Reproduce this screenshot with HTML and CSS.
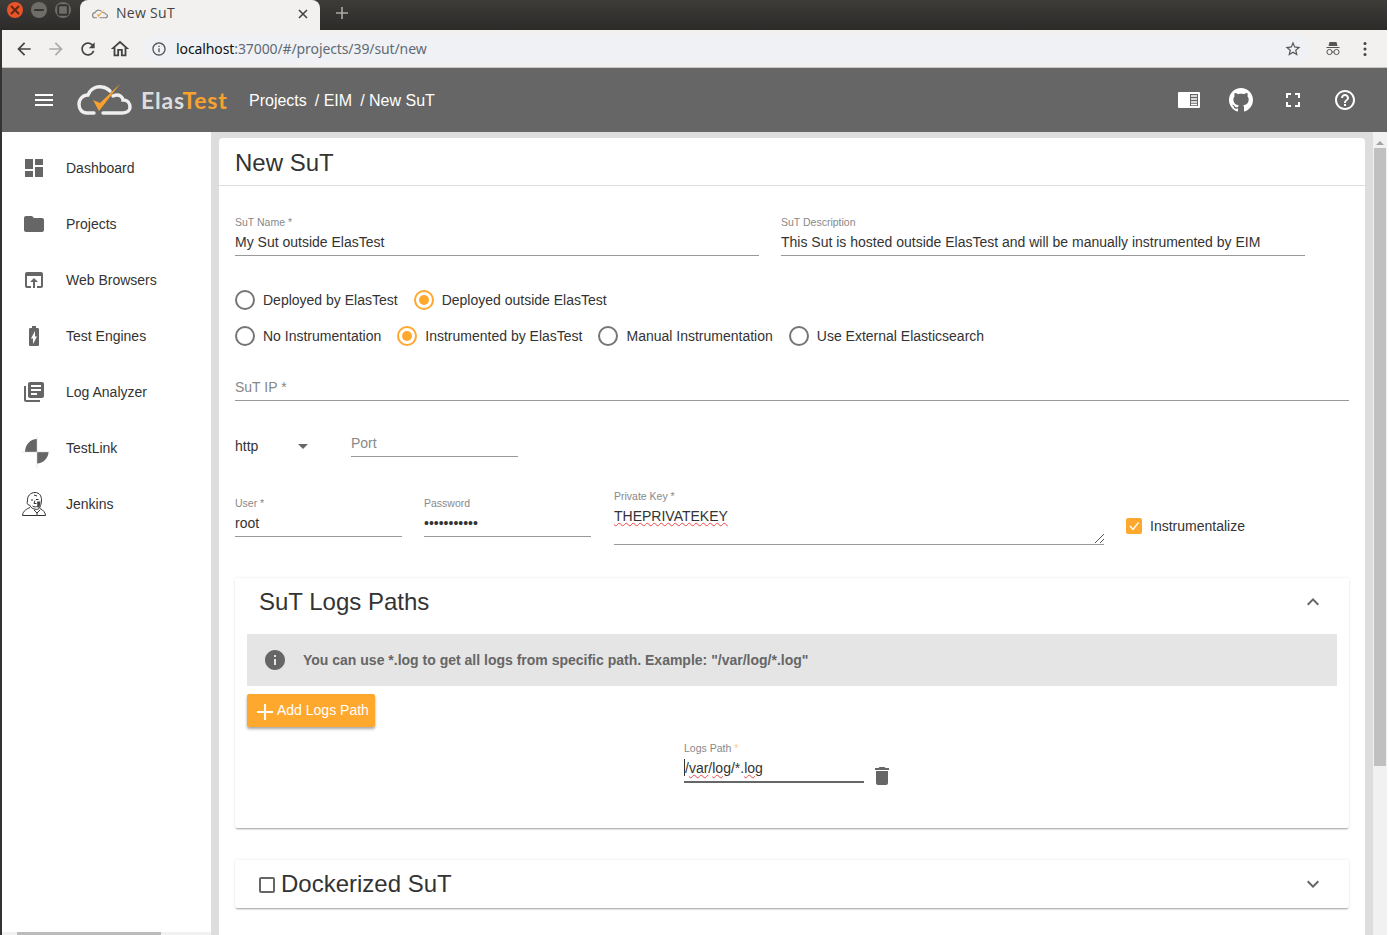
FILE: index.html
```html
<!DOCTYPE html>
<html lang="en">
<head>
  <meta charset="UTF-8">
  <title>New SuT</title>
  <link rel="stylesheet" href="styles.css">
</head>
<body>
<div class="window">

  <!-- Browser tabs -->
  <div class="tabstrip">
    <div class="winbtns">
      <span class="winbtn winbtn-close"><svg viewBox="0 0 10 10"><path d="M2.5 2.5l5 5M7.5 2.5l-5 5" stroke="#5a2a14" stroke-width="1.2"/></svg></span>
      <span class="winbtn"><svg viewBox="0 0 10 10"><path d="M2 5h6" stroke="#333" stroke-width="1.2"/></svg></span>
      <span class="winbtn"><svg viewBox="0 0 10 10"><rect x="2" y="2" width="6" height="6" rx="1" fill="none" stroke="#333" stroke-width="1.2"/></svg></span>
    </div>
    <div class="tab">
      <svg class="favicon" viewBox="0 0 55 32"><path d="M17 29H10C4 29 2 24 2 20 2 15 6 11 11 11 13 5 19 2 25 3 28 3 31 5 33 7M36 12C43 9 46 14 46 16 51 16 53 20 53 23 53 27 49 29 45 29H26" fill="none" stroke="#888" stroke-width="4"/><path d="M16 16l6 11L43 0 23 19z" fill="#f9a12e"/></svg>
      <span class="tab-title">New SuT</span>
      <svg class="tab-x" viewBox="0 0 10 10"><path d="M1 1l8 8M9 1l-8 8" stroke="#444" stroke-width="1.6"/></svg>
    </div>
    <svg class="tab-new" viewBox="0 0 12 12"><path d="M6 0v12M0 6h12" stroke="#aaa" stroke-width="1.6"/></svg>
  </div>

  <!-- Browser address bar -->
  <div class="urlbar">
    <svg class="nav-icon" viewBox="0 0 24 24"><path fill="#444" d="M20 11H7.83l5.59-5.59L12 4l-8 8 8 8 1.41-1.41L7.83 13H20v-2z"/></svg>
    <svg class="nav-icon" viewBox="0 0 24 24"><path fill="#aaa" d="M4 11h12.170l-5.590-5.590L12 4l8 8-8 8-1.410-1.410L16.170 13H4v-2z"/></svg>
    <svg class="nav-icon" viewBox="0 0 24 24"><path fill="#444" d="M17.65 6.35C16.2 4.9 14.21 4 12 4c-4.42 0-7.99 3.58-7.99 8s3.57 8 7.99 8c3.73 0 6.84-2.55 7.73-6h-2.08c-.82 2.33-3.04 4-5.65 4-3.31 0-6-2.69-6-6s2.69-6 6-6c1.66 0 3.14.69 4.22 1.78L13 11h7V4l-2.35 2.35z"/></svg>
    <svg class="nav-icon nav-home" viewBox="0 0 24 24"><path fill="#444" d="M12 5.69l5 4.5V18h-2v-6H9v6H7v-7.81l5-4.5M12 3L2 12h3v8h6v-6h2v6h6v-8h3L12 3z"/></svg>
    <div class="omnibox">
      <svg class="omni-info" viewBox="0 0 24 24"><path fill="#555" d="M11 7h2v2h-2zm0 4h2v6h-2zm1-9C6.48 2 2 6.48 2 12s4.48 10 10 10 10-4.48 10-10S17.52 2 12 2zm0 18c-4.41 0-8-3.59-8-8s3.59-8 8-8 8 3.59 8 8-3.59 8-8 8z"/></svg>
      <span class="url"><span class="url-host">localhost</span>:37000/#/projects/39/sut/new</span>
      <svg class="omni-star" viewBox="0 0 24 24"><path fill="#555" d="M22 9.24l-7.19-.62L12 2 9.19 8.63 2 9.24l5.46 4.73L5.82 21 12 17.27 18.18 21l-1.63-7.03L22 9.24zM12 15.4l-3.76 2.27 1-4.28-3.32-2.88 4.38-.38L12 6.1l1.71 4.04 4.38.38-3.32 2.88 1 4.28L12 15.4z"/></svg>
    </div>
    <svg class="incognito" viewBox="0 0 16 16"><path fill="#555" d="M4.5 1h7l1 4h-9zM1.5 6h13v1h-13z"/><circle cx="4.5" cy="11" r="2.6" fill="none" stroke="#555"/><circle cx="11.5" cy="11" r="2.6" fill="none" stroke="#555"/><path d="M7 11h2" stroke="#555"/></svg>
    <svg class="dots" viewBox="0 0 4 16"><circle cx="2" cy="2.5" r="1.5" fill="#444"/><circle cx="2" cy="8" r="1.5" fill="#444"/><circle cx="2" cy="13.5" r="1.5" fill="#444"/></svg>
  </div>

  <!-- App toolbar -->
  <header class="toolbar">
    <svg class="menu-icon" viewBox="0 0 24 24"><path fill="#fff" d="M3 18h18v-2H3v2zm0-5h18v-2H3v2zm0-7v2h18V6H3z"/></svg>
    <svg class="logo" viewBox="0 0 55 32"><path d="M17 29H10C4 29 2 24 2 20 2 15 6 11 11 11 13 5 19 2 25 3 28 3 31 5 33 7M36 12C43 9 46 14 46 16 51 16 53 20 53 23 53 27 49 29 45 29H26" fill="none" stroke="#eee" stroke-width="3.400" stroke-linecap="round"/><path d="M16 16l6 11L43 0 23 19z" fill="#f9a12e"/></svg>
    <span class="brand">Elas<span class="brand-test">Test</span></span>
    <nav class="crumbs">Projects<span class="crumb-sep">/ EIM</span><span class="crumb-sep">/ New SuT</span></nav>
    <div class="toolbar-actions">
      <span class="action"><svg width="24" height="24" viewBox="0 0 24 24"><rect x="1" y="4" width="22" height="16" rx="1" fill="#fff"/><rect x="13" y="6" width="8" height="12" fill="#666"/><path d="M14 8h6M14 11h6M14 14h6M14 16.5h6" stroke="#fff" stroke-width="1.4"/></svg></span>
      <span class="action"><svg width="24" height="24" viewBox="0 0 16 16"><path fill="#fff" d="M8 0C3.58 0 0 3.58 0 8c0 3.54 2.29 6.53 5.47 7.59.4.07.55-.17.55-.38 0-.19-.01-.82-.01-1.49-2.01.37-2.53-.49-2.69-.94-.09-.23-.48-.94-.82-1.13-.28-.15-.68-.52-.01-.53.63-.01 1.08.58 1.23.82.72 1.21 1.87.87 2.33.66.07-.52.28-.87.51-1.07-1.78-.2-3.64-.89-3.64-3.95 0-.87.31-1.59.82-2.15-.08-.2-.36-1.02.08-2.12 0 0 .67-.21 2.2.82.64-.18 1.32-.27 2-.27.68 0 1.36.09 2 .27 1.53-1.04 2.2-.82 2.2-.82.44 1.1.16 1.92.08 2.12.51.56.82 1.27.82 2.15 0 3.07-1.87 3.75-3.65 3.95.29.25.54.73.54 1.48 0 1.07-.01 1.93-.01 2.2 0 .21.15.46.55.38A8.013 8.013 0 0016 8c0-4.42-3.58-8-8-8z"/></svg></span>
      <span class="action"><svg width="24" height="24" viewBox="0 0 24 24"><path fill="#fff" d="M7 14H5v5h5v-2H7v-3zm-2-4h2V7h3V5H5v5zm12 7h-3v2h5v-5h-2v3zM14 5v2h3v3h2V5h-5z"/></svg></span>
      <span class="action"><svg width="24" height="24" viewBox="0 0 24 24"><path fill="#fff" d="M11 18h2v-2h-2v2zm1-16C6.48 2 2 6.48 2 12s4.48 10 10 10 10-4.48 10-10S17.52 2 12 2zm0 18c-4.41 0-8-3.59-8-8s3.59-8 8-8 8 3.59 8 8-3.59 8-8 8zm0-14c-2.21 0-4 1.79-4 4h2c0-1.1.9-2 2-2s2 .9 2 2c0 2-3 1.75-3 5h2c0-2.25 3-2.5 3-5 0-2.21-1.79-4-4-4z"/></svg></span>
    </div>
  </header>

  <div class="shell">

    <!-- Side navigation -->
    <aside class="sidenav">
      <ul class="navlist">
        <li class="navitem"><svg class="navicon" viewBox="0 0 24 24"><path d="M3 13h8V3H3v10zm0 8h8v-6H3v6zm10 0h8V11h-8v10zm0-18v6h8V3h-8z"/></svg>Dashboard</li>
        <li class="navitem"><svg class="navicon" viewBox="0 0 24 24"><path d="M10 4H4c-1.1 0-1.99.9-1.99 2L2 18c0 1.1.9 2 2 2h16c1.1 0 2-.9 2-2V8c0-1.1-.9-2-2-2h-8l-2-2z"/></svg>Projects</li>
        <li class="navitem"><svg class="navicon" viewBox="0 0 24 24"><path d="M19 4H5c-1.11 0-2 .9-2 2v12c0 1.1.89 2 2 2h4v-2H5V8h14v10h-4v2h4c1.1 0 2-.9 2-2V6c0-1.1-.89-2-2-2zm-7 6l-4 4h3v6h2v-6h3l-4-4z"/></svg>Web Browsers</li>
        <li class="navitem"><svg class="navicon" viewBox="0 0 24 24"><path d="M15.67 4H14V2h-4v2H8.33C7.6 4 7 4.6 7 5.33v15.33C7 21.4 7.6 22 8.33 22h7.33c.74 0 1.34-.6 1.34-1.33V5.33C17 4.6 16.4 4 15.67 4zM11 20v-5.5H9L13 7v5.500h2L11 20z"/></svg>Test Engines</li>
        <li class="navitem"><svg class="navicon" viewBox="0 0 24 24"><path d="M4 6H2v14c0 1.1.9 2 2 2h14v-2H4V6zm16-4H8c-1.1 0-2 .9-2 2v12c0 1.1.9 2 2 2h12c1.1 0 2-.9 2-2V4c0-1.1-.9-2-2-2zm-1 9H9V9h10v2zm-4 4H9v-2h6v2zm4-8H9V5h10v2z"/></svg>Log Analyzer</li>
        <li class="navitem"><svg class="navicon" viewBox="0 0 24 24"><path d="M15 3V16H3C3 9 8 3 15 3Z"/><path d="M15 16H26.500C26.500 22 21 27.500 15 27.500Z"/><path d="M15 1V32M0 16H28" stroke="#ccc" stroke-width=".5"/></svg>TestLink</li>
        <li class="navitem"><svg class="navicon" viewBox="0 0 24 24"><g fill="none" stroke="#333" stroke-width="1"><path d="M5.500 9C5 4 8.500 .5 13 .5S19.500 4 19.500 8 18.500 13 18 15 15 18 12 17 8.500 14.500 7.500 13C5.500 13.500 4.500 10.500 5.500 9Z"/><path d="M9 8h2M14 7.500h2.500M13 8.500L12 11.500h2.500M10.500 14c2 1.500 3.500 1 5.500 0M12 3l3 1"/><path d="M8 15.500C5 17 1 18.500 .5 23.500H23.500C23.500 21 21.500 18 18 16.500"/><path d="M12 18l3 3 3-3M15 21v2.500"/></g><path d="M15 9.500h3.500l-1 6h-2z" fill="#444"/></svg>Jenkins</li>
      </ul>
      <div class="hscroll"><div class="hscroll-thumb"></div></div>
    </aside>

    <!-- Main content -->
    <main class="content">
      <section class="card">
        <h1 class="card-title">New SuT</h1>

        <form class="form">
          <div class="row row-name">
            <div class="field field-half">
              <div class="field-label">SuT Name *</div>
              <div class="field-value">My Sut outside ElasTest</div>
            </div>
            <div class="field field-half">
              <div class="field-label">SuT Description</div>
              <div class="field-value">This Sut is hosted outside ElasTest and will be manually instrumented by EIM</div>
            </div>
          </div>

          <div class="radios radios-deploy">
            <span class="radio"><span class="radio-dot"></span>Deployed by ElasTest</span>
            <span class="radio radio-on"><span class="radio-dot"></span>Deployed outside ElasTest</span>
          </div>
          <div class="radios radios-instr">
            <span class="radio"><span class="radio-dot"></span>No Instrumentation</span>
            <span class="radio radio-on"><span class="radio-dot"></span>Instrumented by ElasTest</span>
            <span class="radio"><span class="radio-dot"></span>Manual Instrumentation</span>
            <span class="radio"><span class="radio-dot"></span>Use External Elasticsearch</span>
          </div>

          <div class="field field-ip">
            <div class="field-value field-hint">SuT IP *</div>
          </div>

          <div class="row row-port">
            <div class="select">http<span class="select-arrow"></span></div>
            <div class="field field-port">
              <div class="field-value field-hint">Port</div>
            </div>
          </div>

          <div class="row row-access">
            <div class="field field-user">
              <div class="field-label">User *</div>
              <div class="field-value">root</div>
            </div>
            <div class="field field-user">
              <div class="field-label">Password</div>
              <div class="field-value">•••••••••••</div>
            </div>
            <div class="field field-key">
              <div class="field-label">Private Key *</div>
              <div class="field-value"><span class="misspelt">THEPRIVATEKEY</span></div>
              <svg class="grip" viewBox="0 0 10 10"><path d="M1 10L10 1M6 10l4-4" stroke="#555" stroke-width="1"/></svg>
            </div>
            <label class="check">
              <span class="check-box"><svg viewBox="0 0 16 16"><path d="M4 8l3 3.500L12.500 4.500" fill="none" stroke="#fff" stroke-width="1.300"/></svg></span>
              Instrumentalize
            </label>
          </div>

          <section class="panel panel-logs">
            <div class="panel-head">
              <h2 class="panel-title">SuT Logs Paths</h2>
              <svg class="chevron" viewBox="0 0 24 24"><path d="M12 8l-6 6 1.41 1.41L12 10.83l4.59 4.58L18 14z"/></svg>
            </div>
            <div class="panel-body">
              <div class="info">
                <svg class="info-icon" viewBox="0 0 24 24"><path d="M12 2C6.48 2 2 6.48 2 12s4.48 10 10 10 10-4.48 10-10S17.52 2 12 2zm1 15h-2v-6h2v6zm0-8h-2V7h2v2z"/></svg>
                You can use *.log to get all logs from specific path. Example: "/var/log/*.log"
              </div>
              <button type="button" class="add-btn">
                <svg class="add-plus" viewBox="0 0 16 16"><path d="M8 0v16M0 8h16" stroke="#fff" stroke-width="2"/></svg>
                Add Logs Path
              </button>
              <div class="log-row">
                <div class="field field-log">
                  <div class="field-label">Logs Path <span class="req">*</span></div>
                  <div class="field-value"><span class="caret"></span>/<span class="misspelt">var</span>/<span class="misspelt">log</span>/*.<span class="misspelt">log</span></div>
                </div>
                <svg class="trash" viewBox="0 0 24 24"><path d="M6 19c0 1.100.9 2 2 2h8c1.100 0 2-.9 2-2V7H6v12zM19 4h-3.500l-1-1h-5l-1 1H5v2h14V4z"/></svg>
              </div>
            </div>
          </section>

          <section class="panel panel-docker">
            <div class="panel-head">
              <h2 class="panel-title"><span class="docker-box"></span>Dockerized SuT</h2>
              <svg class="chevron" viewBox="0 0 24 24"><path d="M16.59 8.590L12 13.170 7.410 8.590 6 10l6 6 6-6z"/></svg>
            </div>
          </section>
        </form>
      </section>
      <div class="vscroll">
        <span class="vscroll-up"></span>
        <div class="vscroll-thumb"></div>
      </div>
    </main>
  </div>
</div>
</body>
</html>
```

FILE: styles.css
```css
* {
  box-sizing: border-box;
}

html, body {
  margin: 0;
  height: 100%;
  overflow: hidden;
  background-color: #fff;
}

body {
  font-family: "Liberation Sans", Arial, sans-serif;
  font-size: 14px;
  color: #333;
}

.window {
  width: 1387px;
  height: 935px;
  border-left: 2px solid #333;
  display: flex;
  flex-direction: column;
}

/* browser tabs */
.tabstrip {
  height: 30px;
  margin-left: -2px;
  background: linear-gradient(#3d3c39, #2c2b29);
  display: flex;
  align-items: flex-start;
  flex: none;
}

.winbtns {
  width: 80px;
  display: flex;
  gap: 8px;
  padding: 2px 0 0 7px;
}

.winbtn {
  width: 16px;
  height: 16px;
  border-radius: 50%;
  background-color: #6f6d68;
  display: flex;
}

.winbtn-close {
  background-color: #e9542a;
}

.tab {
  width: 240px;
  height: 30px;
  background-color: #f2f1f0;
  border-radius: 8px 8px 0 0;
  display: flex;
  align-items: center;
  padding: 0 12px 6px;
}

.favicon {
  width: 16px;
  height: 10px;
  margin: 3px 8px 0 0;
}

.tab-title {
  flex: 1;
  font-family: "Open Sans", sans-serif;
  font-size: 14px;
  letter-spacing: 0.3px;
  color: #444;
}

.tab-x {
  width: 10px;
  height: 10px;
  margin: 3px 0 0;
}

.tab-new {
  width: 12px;
  height: 12px;
  margin: 7px 0 0 16px;
}

/* address bar */
.urlbar {
  height: 38px;
  background-color: #f2f1f0;
  border-bottom: 1px solid #c8c6c2;
  display: flex;
  align-items: center;
  padding-left: 12px;
  flex: none;
}

.nav-icon {
  width: 20px;
  height: 20px;
  margin-right: 12px;
}

.nav-home {
  width: 22px;
  height: 22px;
  margin: 0 9px 0 -1px;
}

.omnibox {
  width: 1167px;
  height: 28px;
  margin-left: 3px;
  border-radius: 14px;
  background-color: #f0f1f4;
  display: flex;
  align-items: center;
  padding: 0 8px 0 8px;
}

.omni-info {
  width: 16px;
  height: 16px;
  margin-right: 9px;
}

.url {
  flex: 1;
  font-family: "Noto Sans", sans-serif;
  font-size: 14px;
  letter-spacing: -0.1px;
  color: #5f6b75;
}

.url-host {
  color: #111;
}

.omni-star {
  width: 18px;
  height: 18px;
}

.incognito {
  width: 16px;
  height: 16px;
  margin-left: 15px;
}

.dots {
  width: 4px;
  height: 16px;
  margin-left: 22px;
}

/* app toolbar */
.toolbar {
  height: 64px;
  background-color: #666;
  display: flex;
  align-items: center;
  color: #fff;
  flex: none;
}

.menu-icon {
  width: 24px;
  height: 24px;
  margin-left: 30px;
}

.logo {
  width: 55px;
  height: 32px;
  margin: 0 9px 0 21px;
}

.brand {
  font-family: Lato, sans-serif;
  font-size: 23px;
  font-weight: 700;
  letter-spacing: 0.8px;
  color: #ddd;
  width: 108px;
}

.brand-test {
  color: #f9a12e;
}

.crumbs {
  font-size: 16px;
  padding-top: 2px;
}

.crumb-sep {
  margin-left: 8px;
}

.toolbar-actions {
  margin-left: auto;
  display: flex;
  margin-right: 16px;
}

.action {
  width: 52px;
  height: 40px;
  display: flex;
  align-items: center;
  justify-content: center;
}

/* layout under the toolbar */
.shell {
  flex: 1;
  min-height: 0;
  display: flex;
  background-color: #ddd;
}

.sidenav {
  width: 209px;
  background-color: #fff;
  display: flex;
  flex-direction: column;
  flex: none;
}

.navlist {
  list-style: none;
  margin: 8px 0 0;
  padding: 0;
  flex: 1;
}

.navitem {
  height: 56px;
  display: flex;
  align-items: center;
  gap: 20px;
  padding-left: 20px;
}

.navicon {
  width: 24px;
  height: 24px;
  fill: #666;
  overflow: visible;
}

.hscroll {
  height: 3px;
  background-color: #f1f1f1;
  padding-left: 15px;
}

.hscroll-thumb {
  width: 144px;
  height: 3px;
  background-color: #bbb;
}

.content {
  flex: 1;
  min-width: 0;
  display: flex;
  padding: 6px 0 0 8px;
}

.card {
  width: 1146px;
  background-color: #fff;
  border-radius: 4px 4px 0 0;
  overflow: hidden;
  flex: none;
}

.card-title {
  height: 48px;
  margin: 0;
  padding-left: 16px;
  border-bottom: 1px solid #ddd;
  font-size: 24px;
  font-weight: 400;
  line-height: 50px;
  color: #333;
}

.vscroll {
  width: 14px;
  margin-left: 8px;
  margin-top: -6px;
  background-color: #f1f1f1;
  padding-top: 9px;
  display: flex;
  flex-direction: column;
  align-items: center;
  gap: 3px;
}

.vscroll-up {
  width: 0;
  height: 0;
  border-left: 4px solid transparent;
  border-right: 4px solid transparent;
  border-bottom: 4px solid #a3a3a3;
}

.vscroll-thumb {
  width: 12px;
  height: 618px;
  background-color: #c0c0c0;
}

/* form */
.form {
  padding: 30px 16px 0;
}

.row {
  display: flex;
}

.row-name {
  gap: 22px;
}

.field {
  border-bottom: 1px solid #999;
}

.field-half {
  width: 524px;
}

.field-label {
  font-size: 10.5px;
  line-height: 13px;
  color: #888;
}

.field-value {
  margin-top: 4px;
  padding-bottom: 4px;
  line-height: 18px;
  color: #333;
}

.field-hint {
  margin-top: 0;
  color: #888;
}

.radios {
  display: flex;
  gap: 16px;
}

.radios-deploy {
  margin-top: 34px;
}

.radios-instr {
  margin-top: 16px;
}

.radio {
  display: flex;
  align-items: center;
  gap: 8px;
  line-height: 20px;
}

.radio-dot {
  width: 20px;
  height: 20px;
  border: 2px solid #757575;
  border-radius: 50%;
  display: flex;
  align-items: center;
  justify-content: center;
}

.radio-on .radio-dot {
  border-color: #ffa82e;
}

.radio-on .radio-dot::after {
  content: "";
  width: 10px;
  height: 10px;
  border-radius: 50%;
  background-color: #ffa82e;
}

.field-ip {
  margin-top: 32px;
}

.row-port {
  margin-top: 33px;
  align-items: flex-start;
}

.select {
  width: 116px;
  display: flex;
  justify-content: space-between;
  padding: 3px 43px 0 0;
  line-height: 18px;
}

.select-arrow {
  width: 0;
  height: 0;
  margin: 7px 0 0;
  border-left: 5px solid transparent;
  border-right: 5px solid transparent;
  border-top: 5px solid #666;
}

.field-port {
  width: 167px;
}

.row-access {
  margin-top: 33px;
  align-items: flex-start;
}

.field-user {
  width: 167px;
  margin: 7px 22px 0 0;
}

.field-user + .field-key {
  margin-left: 1px;
}

.field-key {
  width: 490px;
  display: flex;
  flex-direction: column;
}

.field-key .field-value {
  padding-bottom: 0;
}

.misspelt {
  text-decoration: underline wavy #e44;
  text-decoration-thickness: 0.7px;
  text-underline-offset: 1px;
}

.grip {
  width: 10px;
  height: 10px;
  align-self: flex-end;
  margin: 8px 0 1px;
}

.check {
  display: flex;
  align-items: center;
  gap: 8px;
  margin: 26px 0 0 22px;
  line-height: 20px;
}

.check-box {
  width: 16px;
  height: 16px;
  border-radius: 2px;
  background-color: #ffa82e;
  display: flex;
}

/* expansion panels */
.panel {
  background-color: #fff;
  border-radius: 2px;
  box-shadow: 0 2px 2px -1px rgba(0,0,0,0.35), 0 0 3px rgba(0,0,0,0.1);
}

.panel-logs {
  margin-top: 33px;
}

.panel-docker {
  margin-top: 32px;
}

.panel-head {
  height: 48px;
  display: flex;
  align-items: center;
  justify-content: space-between;
  padding: 0 24px;
}

.panel-title {
  margin: 0;
  display: flex;
  align-items: center;
  font-size: 24px;
  font-weight: 400;
  color: #333;
}

.chevron {
  width: 24px;
  height: 24px;
  fill: #666;
}

.panel-body {
  padding: 8px 12px 40px;
}

.info {
  height: 52px;
  background-color: #e5e5e5;
  display: flex;
  align-items: center;
  gap: 16px;
  padding-left: 16px;
  font-weight: 700;
  color: #666;
}

.info-icon {
  width: 24px;
  height: 24px;
  fill: #666;
}

.add-btn {
  height: 33px;
  margin-top: 8px;
  padding: 0 6px 2px 10px;
  border: none;
  border-radius: 2px;
  background-color: #ffa82e;
  color: #fff;
  font-family: inherit;
  font-size: 14px;
  display: flex;
  align-items: center;
  gap: 4px;
  box-shadow: 0 2px 3px rgba(0,0,0,0.35);
}

.add-plus {
  width: 16px;
  height: 16px;
  margin-top: 5px;
}

.log-row {
  display: flex;
  align-items: flex-start;
  margin: 15px 0 0 437px;
}

.field-log {
  width: 180px;
  border-bottom: 2px solid #666;
}

.req {
  color: #ffcb85;
}

.caret {
  display: inline-block;
  width: 1px;
  height: 17px;
  background-color: #333;
  vertical-align: -3px;
}

.trash {
  width: 24px;
  height: 24px;
  fill: #666;
  margin: 22px 0 0 6px;
}

.docker-box {
  width: 16px;
  height: 16px;
  border: 2px solid #666;
  border-radius: 2px;
  margin: 2px 6px 0 0;
}
```
